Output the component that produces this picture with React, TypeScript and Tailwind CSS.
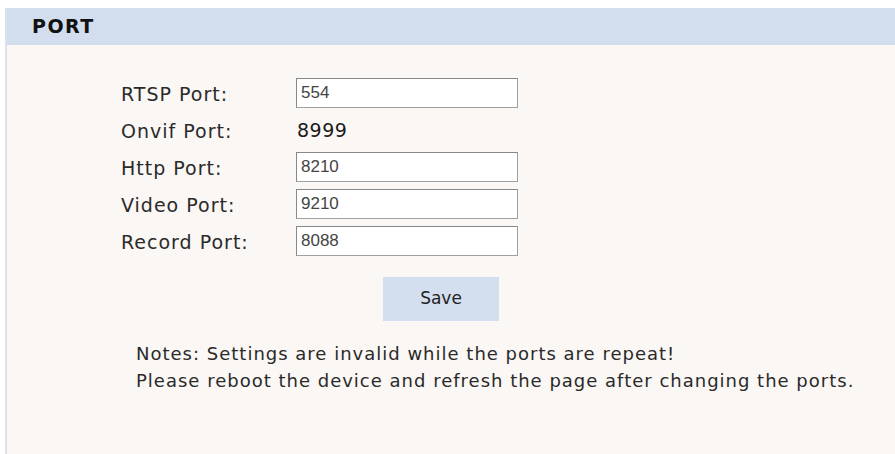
const ports = [
  { label: 'RTSP Port:', value: '554', editable: true },
  { label: 'Onvif Port:', value: '8999', editable: false },
  { label: 'Http Port:', value: '8210', editable: true },
  { label: 'Video Port:', value: '9210', editable: true },
  { label: 'Record Port:', value: '8088', editable: true },
];

export default function App() {
  return (
    <div className="w-[895px] h-[454px] bg-white pt-[8px] pl-[5px] overflow-hidden font-['DejaVu_Sans',sans-serif] text-[#222]">
      <div className="h-full flex flex-col border-l-2 border-[#dce3ee] bg-[#faf7f4]">
        <div className="h-[37px] shrink-0 flex items-center pl-[25px] bg-[#d2ddee]">
          <span className="text-[19px] font-bold tracking-[1.5px] text-[#111]">PORT</span>
        </div>

        <div className="pl-[114px] pt-[33px] flex flex-col gap-[7px]">
          {ports.map((p) => (
            <div key={p.label} className="h-[30px] flex items-center">
              <span className="w-[175px] pt-[3px] text-[19px] tracking-[1px] text-[#2a2a2a]">{p.label}</span>
              {p.editable ? (
                <input
                  defaultValue={p.value}
                  className="w-[222px] h-[30px] px-[4px] bg-white border border-[#a0a0a0] border-t-[#888] border-l-[#888] font-['Liberation_Sans',Arial,sans-serif] text-[17px] text-[#444] outline-none"
                />
              ) : (
                <span className="text-[19px] tracking-[0.5px] text-[#1a1a1a] pl-[1px]">{p.value}</span>
              )}
            </div>
          ))}
        </div>

        <div className="pl-[376px] pt-[21px]">
          <button className="w-[116px] h-[44px] bg-[#d3dfee] text-[17px] text-[#222]">Save</button>
        </div>

        <div className="pl-[129px] pt-[19px] text-[18px] leading-[27px] tracking-[1px] text-[#2a2a2a]">
          <p>Notes: Settings are invalid while the ports are repeat!</p>
          <p>Please reboot the device and refresh the page after changing the ports.</p>
        </div>
      </div>
    </div>
  );
}
